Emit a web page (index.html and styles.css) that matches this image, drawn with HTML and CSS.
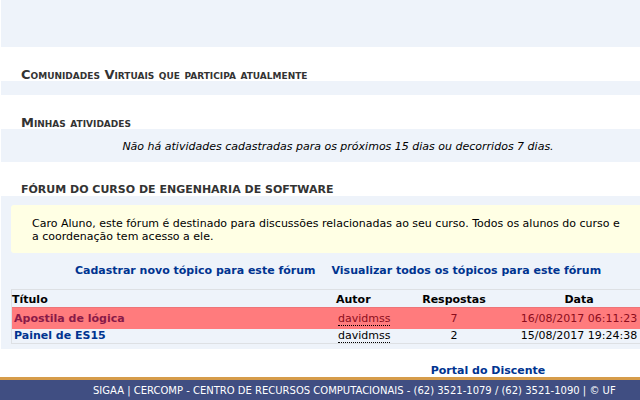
FILE: index.html
```
<!DOCTYPE html>
<html lang="pt-br">
<head>
    <meta charset="UTF-8">
    <meta name="viewport" content="width=device-width, initial-scale=1.0">
    <title>SIGAA - Portal do Discente</title>
    <link rel="stylesheet" href="styles.css">
</head>
<body>
    <main class="portal">
        <section class="bloco avisos"></section>
        <section class="bloco comunidades">
            <h4 class="small-caps">Comunidades Virtuais que participa atualmente</h4>
            <div class="conteudo"></div>
        </section>
        <section class="bloco atividades">
            <h4 class="small-caps">Minhas atividades</h4>
            <div class="conteudo">
                <p class="vazio">Não há atividades cadastradas para os próximos 15 dias ou decorridos 7 dias.</p>
            </div>
        </section>
        <section class="bloco forum">
            <h4>FÓRUM DO CURSO DE ENGENHARIA DE SOFTWARE</h4>
            <div class="conteudo">
                <p class="descricao">Caro Aluno, este fórum é destinado para discussões relacionadas ao seu curso. Todos os alunos do curso e a coordenação tem acesso a ele.</p>
                <div class="acoes">
                    <a href="#">Cadastrar novo tópico para este fórum</a>
                    <a href="#">Visualizar todos os tópicos para este fórum</a>
                </div>
                <table class="topicos">
                    <thead>
                        <tr>
                            <th class="titulo">Título</th>
                            <th class="autor">Autor</th>
                            <th class="respostas">Respostas</th>
                            <th class="data">Data</th>
                        </tr>
                    </thead>
                    <tbody>
                        <tr class="destaque">
                            <td><a href="#">Apostila de lógica</a></td>
                            <td class="autor"><abbr>davidmss</abbr></td>
                            <td class="respostas">7</td>
                            <td class="data">16/08/2017 06:11:23</td>
                        </tr>
                        <tr>
                            <td><a href="#">Painel de ES15</a></td>
                            <td class="autor"><abbr>davidmss</abbr></td>
                            <td class="respostas">2</td>
                            <td class="data">15/08/2017 19:24:38</td>
                        </tr>
                    </tbody>
                </table>
            </div>
        </section>
    </main>
    <nav class="voltar"><a href="#">Portal do Discente</a></nav>
    <footer class="rodape">SIGAA | CERCOMP - CENTRO DE RECURSOS COMPUTACIONAIS - (62) 3521-1079 / (62) 3521-1090 | © UF</footer>
</body>
</html>
```
FILE: styles.css
```
body {
    margin: 0;
    font-family: Verdana, "DejaVu Sans", sans-serif;
    font-size: 11px;
    line-height: 13px;
    color: #000;
    background: #fff;
    overflow: hidden;
}
a {
    color: #003390;
    font-weight: bold;
    text-decoration: none;
}
a:hover {
    text-decoration: underline;
}

/* portal blocks */
.portal {
    min-width: 674px;
    padding-left: 1px;
}
.avisos {
    height: 47px;
    background: #eef3fa;
}
.bloco h4 {
    margin: 0;
    padding: 21px 0 0 20px;
    font-size: 11px;
    line-height: 13px;
    color: #333;
}
.bloco h4.small-caps {
    font-size: 13px;
    font-variant: small-caps;
}
.conteudo {
    background: #eef3fa;
}
.comunidades .conteudo {
    height: 14px;
}
.vazio {
    margin: 0;
    padding: 11px 0 9px;
    font-style: italic;
    text-align: center;
}

/* forum */
.forum .conteudo {
    padding: 9px 10px 5px;
}
.descricao {
    margin: 0;
    padding: 12px 40px 10px 21px;
    background: #ffffe4;
    border-radius: 3px;
}
.acoes {
    display: flex;
    justify-content: center;
    gap: 16px;
    padding: 11px 0 12px;
}
.topicos {
    width: 100%;
    table-layout: fixed;
    border: 1px solid #dde0e4;
    border-collapse: separate;
    border-spacing: 0;
}
.topicos th {
    padding: 3px 0 1px;
    text-align: left;
}
.topicos td {
    padding: 0 2px 1px;
}
.topicos .autor {
    width: 78px;
}
.topicos td.autor abbr {
    border-bottom: 1px dotted #000;
}
.topicos .respostas {
    width: 80px;
    text-align: center;
}
.topicos .data {
    width: 170px;
    text-align: center;
}
.topicos .destaque td {
    padding: 4px 2px;
    color: #8c0d1c;
    background: #ff7b7d;
    border-top: 1px solid #ee7478;
}
.topicos .destaque a {
    color: #8a1a48;
}
.topicos .destaque abbr {
    border-color: #8c0d1c;
}

/* footer */
.voltar {
    min-width: 976px;
    padding: 15px 0 0;
    text-align: center;
}
.rodape {
    padding: 4px 0 4px 93px;
    font-size: 10px;
    white-space: nowrap;
    color: #fff;
    background: #404e82;
    border-top: 3px solid #d69c4a;
}
```
